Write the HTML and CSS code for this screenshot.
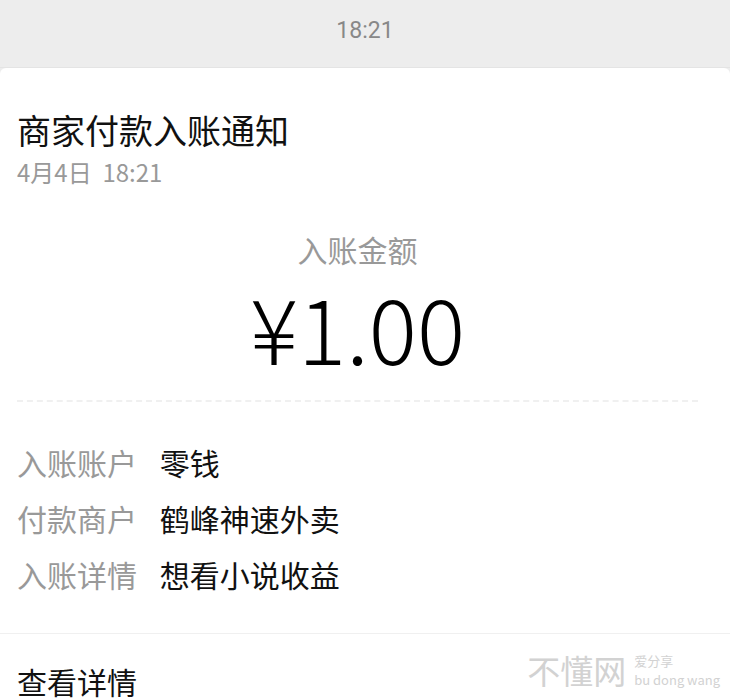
FILE: index.html
```html
<html>
<head>
    <title>商家付款入账通知</title>
    <link rel="stylesheet" href="styles.css">
</head>
<body>

<div class="time-bar">18:21</div>

<div class="card">

    <div class="head">
        <div class="title">商家付款入账通知</div>
        <div class="date">4月4日&nbsp;&nbsp;18:21</div>
    </div>

    <div class="amount-box">
        <div class="amount-label">入账金额</div>
        <div class="amount">¥1.00</div>
    </div>

    <div class="rows">
        <div class="row">
            <span class="key">入账账户</span>
            <span class="val">零钱</span>
        </div>
        <div class="row">
            <span class="key">付款商户</span>
            <span class="val">鹤峰神速外卖</span>
        </div>
        <div class="row">
            <span class="key">入账详情</span>
            <span class="val">想看小说收益</span>
        </div>
    </div>

    <div class="footer">
        <div class="more">查看详情</div>
        <div class="mark">
            <span class="mark-big">不懂网</span>
            <span class="mark-small">
                <span>爱分享</span>
                <span>bu dong wang</span>
            </span>
        </div>
    </div>

</div>

</body>
</html>
```

FILE: styles.css
```css
body
{
    font-family: "Noto Sans CJK SC", "Noto Sans", sans-serif;
    background-color: #ededed;
    color: #111;
    margin: 0;
    overflow: hidden;
}

.time-bar
{
    height: 67px;
    line-height: 62px;
    text-align: center;
    font-family: "Roboto", "Noto Sans CJK SC", sans-serif;
    font-size: 23px;
    color: #888;
    border-bottom: 1px solid #e4e4e4;
}

.card
{
    background-color: #fff;
    border-radius: 6px 6px 0 0;
    height: 632px;
}

.head
{
    padding: 37px 17px 0;
}

.title
{
    font-size: 34px;
    line-height: 50px;
}

.date
{
    margin-top: 2px;
    font-size: 24px;
    line-height: 30px;
    color: #999;
}

.amount-box
{
    margin: 0 32px 0 17px;
    padding-top: 42px;
    height: 215px;
    text-align: center;
    border-bottom: 2px dashed #f0f0f0;
    box-sizing: border-box;
}

.amount-label
{
    font-size: 30px;
    line-height: 40px;
    color: #999;
}

.amount
{
    margin-top: 12px;
    font-size: 90px;
    line-height: 90px;
    font-weight: 300;
    color: #000;
}

.rows
{
    padding: 32px 17px 0;
    height: 232px;
    box-sizing: border-box;
    border-bottom: 1px solid #f0f0f0;
}

.row
{
    font-size: 30px;
    line-height: 56px;
}

.key
{
    color: #999;
    margin-right: 16px;
}

.val
{
    color: #111;
}

.footer
{
    display: flex;
    justify-content: space-between;
    align-items: flex-start;
    padding: 24px 0 0 17px;
}

.more
{
    font-size: 30px;
    line-height: 46px;
}

.mark
{
    display: flex;
    align-items: center;
    margin-top: -12px;
    padding-right: 10px;
    color: #d2d2d2;
}

.mark-big
{
    font-size: 33px;
}

.mark-small
{
    display: flex;
    flex-direction: column;
    font-size: 13px;
    line-height: 19px;
    margin-left: 8px;
}
```
